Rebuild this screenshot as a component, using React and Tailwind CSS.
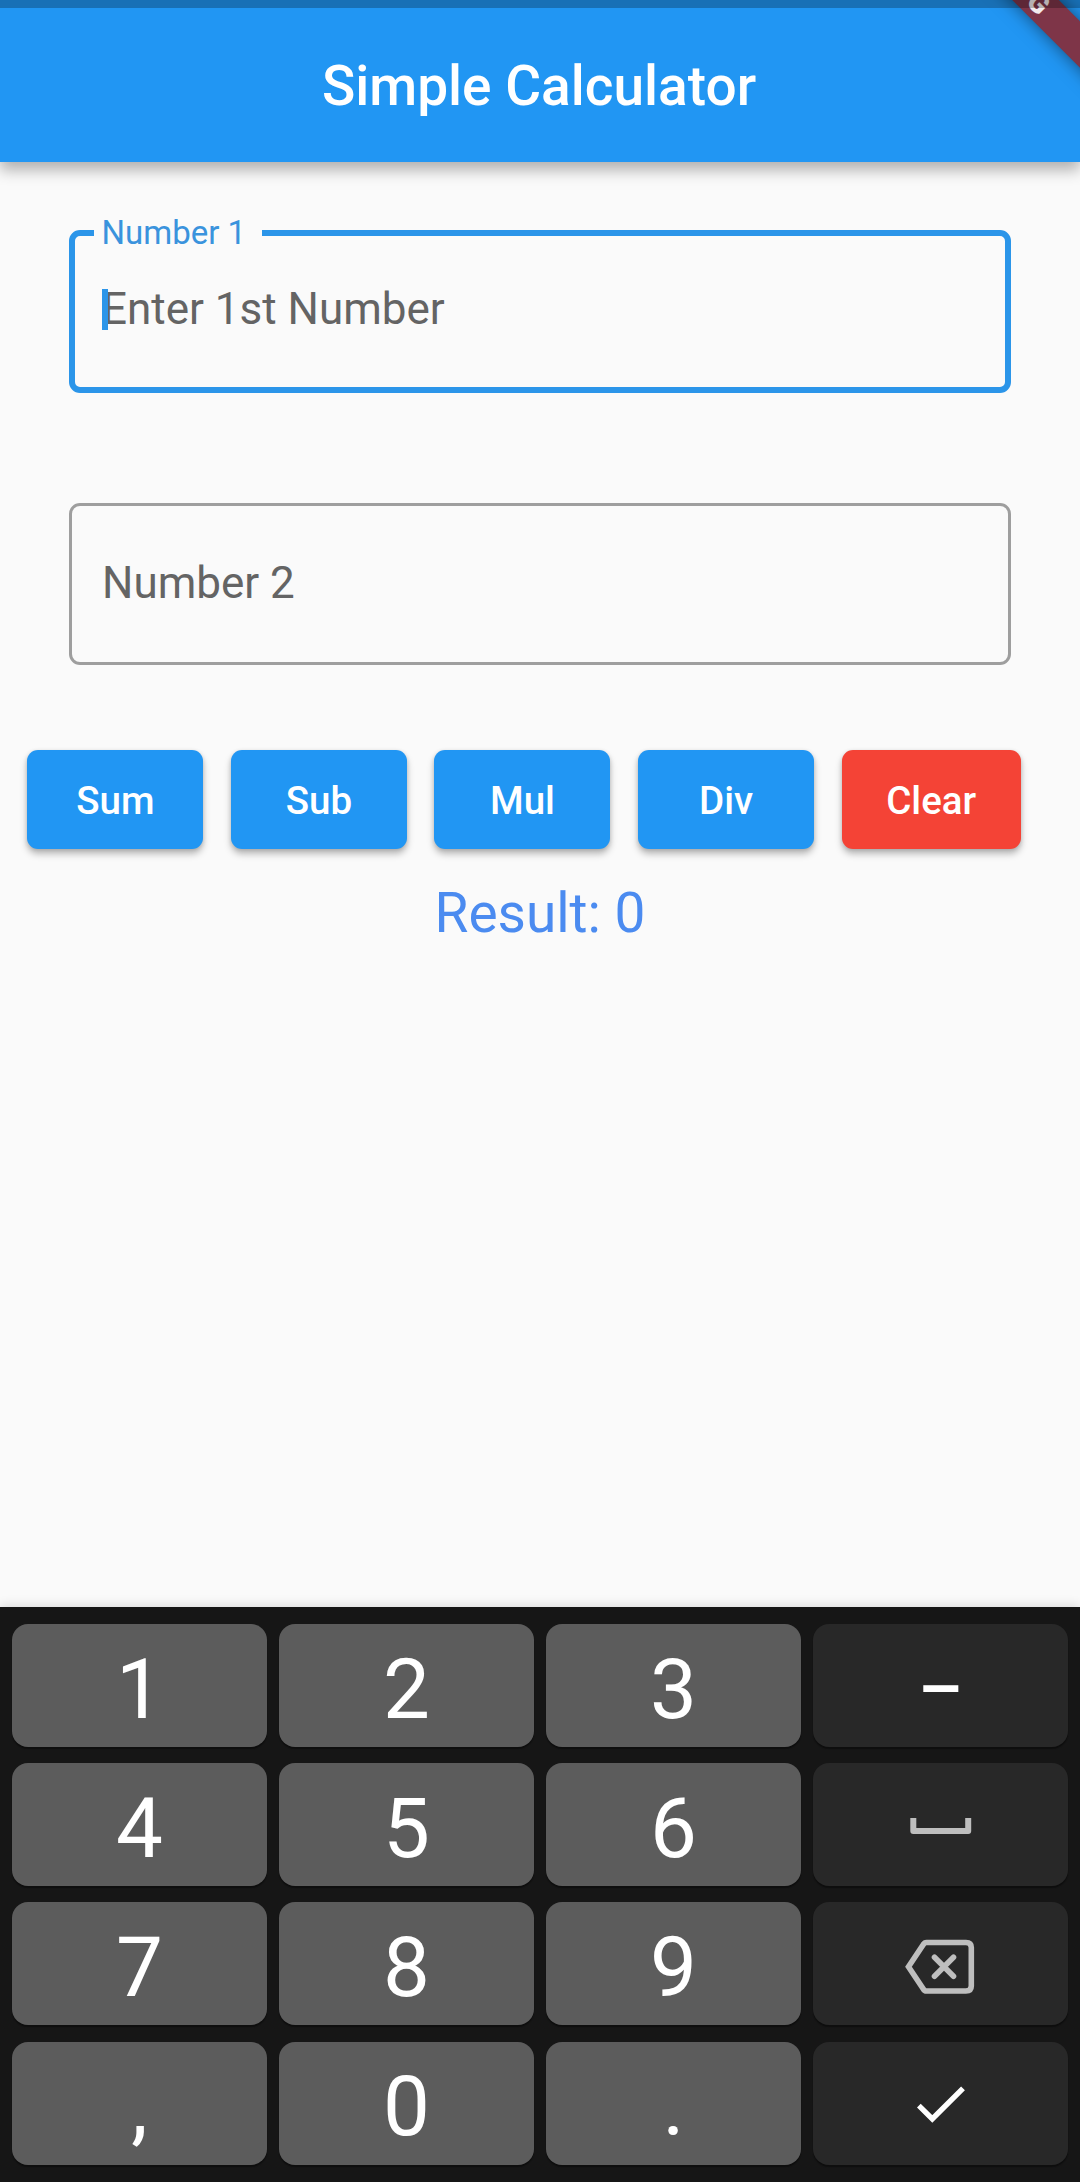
import React from "react";

const keys = [
  "1", "2", "3", "minus",
  "4", "5", "6", "space",
  "7", "8", "9", "back",
  ",", "0", ".", "done",
];

const special = {
  minus: <span className="translate-y-[4px] text-[70px] font-medium leading-none">–</span>,
  space: (
    <svg width="62" height="18" viewBox="0 0 62 18" fill="none" stroke="#bebebe" strokeWidth="6" strokeLinejoin="round" className="translate-y-[1px]">
      <path d="M3.3 1V14H58.2V1" />
    </svg>
  ),
  back: (
    <svg width="70" height="56" viewBox="0 0 70 56" fill="none" stroke="#bebebe" strokeWidth="5.6" className="-translate-x-[1px] translate-y-[3px]">
      <path d="M21.5 3.5H61Q66.3 3.5 66.3 8.5V47Q66.3 52 61 52H21.5Q19.5 52 18.3 50L3.5 27.8L18.3 5.5Q19.5 3.5 21.5 3.5Z" />
      <path d="M29.5 18.3L48.5 37.3M48.5 18.3L29.5 37.3" strokeLinecap="round" />
    </svg>
  ),
  done: (
    <svg width="48" height="38" viewBox="0 0 48 38" fill="none" stroke="#fff" strokeWidth="5.4" className="translate-y-[2px]">
      <path d="M1.8 19.6L15.3 33L46 2.3" />
    </svg>
  ),
};

function Key({ name }) {
  const icon = special[name];
  return (
    <button
      className={
        "flex h-[123px] items-center justify-center rounded-[16px] text-[83.5px] leading-none text-white shadow-[0_2px_1px_#0e0e0e] " +
        (icon ? "bg-[#282828]" : "bg-[#5c5c5c]")
      }
    >
      {icon || <span className="translate-y-[4px]">{name}</span>}
    </button>
  );
}

function Action({ label, danger }) {
  return (
    <button
      className={
        "h-[99px] rounded-[11px] pt-[3px] text-[38.5px] font-medium leading-none text-white shadow-[0_5px_7px_rgba(0,0,0,0.26),0_1px_4px_rgba(0,0,0,0.12)] " +
        (danger ? "w-[179px] bg-[#f44336]" : "w-[176px] bg-[#2196f3]")
      }
    >
      {label}
    </button>
  );
}

export default function App() {
  return (
    <div className="flex h-[2182px] w-[1080px] flex-col overflow-hidden bg-[#fafafa] font-['Roboto',sans-serif]">
      <header className="relative z-10 h-[162px] shrink-0 bg-[#2196f3] shadow-[0_8px_14px_rgba(0,0,0,0.3)]">
        <h1 className="flex h-full items-center justify-center pt-[11px] pr-[2px] text-[55px] font-medium leading-none text-white">
          Simple Calculator
        </h1>
        <div className="absolute inset-0 overflow-hidden">
          <div className="absolute top-[-15px] left-[927px] flex h-[33px] w-[220px] rotate-45 items-center justify-center bg-[#7e3548] text-[28px] font-black leading-none text-white/90 shadow-[0_0_17px_rgba(0,0,0,0.5)]">
            <span className="translate-x-[2px]">G</span>
          </div>
          <div className="absolute inset-x-0 top-0 h-[8px] bg-black/25" />
        </div>
      </header>

      <main className="flex flex-1 flex-col">
        <div className="relative mx-[69px] mt-[68px] h-[163px] rounded-[11px] border-[6px] border-[#2b95e9] pt-[47px] pl-[27px]">
          <label className="absolute top-[-21px] left-[19px] h-[36px] w-[168px] bg-[#fafafa] pl-[7.5px] text-[33px] leading-[36px] text-[#3a93dd]">
            Number 1
          </label>
          <div className="relative text-[44px] leading-[52px] text-[#646464]">
            Enter 1st Number
            <span className="absolute top-[6px] left-0 h-[41px] w-[6px] bg-[#2b95e9]" />
          </div>
        </div>

        <div className="mx-[69px] mt-[110px] flex h-[162px] items-center rounded-[11px] border-[3px] border-[#9e9e9e] pb-[2px] pl-[30px] text-[44px] text-[#646464]">
          Number 2
        </div>

        <div className="mt-[85px] flex gap-[27.6px] pl-[27.3px]">
          <Action label="Sum" />
          <Action label="Sub" />
          <Action label="Mul" />
          <Action label="Div" />
          <Action label="Clear" danger />
        </div>

        <p className="mt-[32px] text-center text-[55px] leading-[64px] text-[#4b8bf0]">Result: 0</p>
      </main>

      <section className="grid h-[575px] shrink-0 grid-cols-4 content-start gap-x-[12px] gap-y-[16.2px] bg-[#161616] px-[12px] pt-[17px] shadow-[0_-2px_10px_rgba(0,0,0,0.12)]">
        {keys.map((k) => (
          <Key key={k} name={k} />
        ))}
      </section>
    </div>
  );
}
